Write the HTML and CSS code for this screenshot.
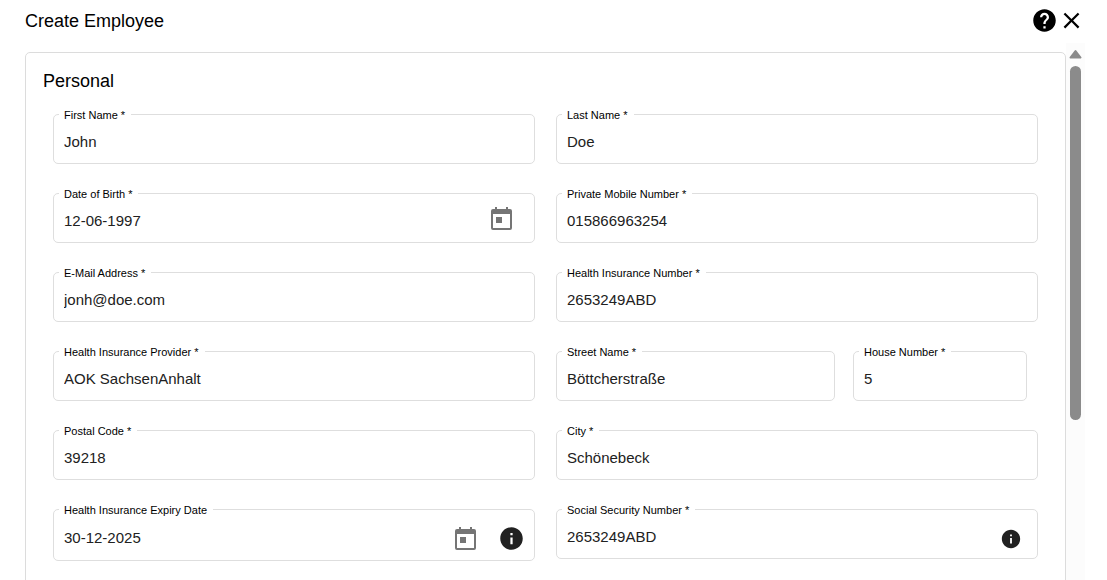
FILE: index.html
```html
<!DOCTYPE html>
<html lang="en">
	<head>
		<meta charset="utf-8" />
		<title>Create Employee</title>
		<link rel="stylesheet" href="styles.css">
	</head>
	<body>
		<!--icons used more than once-->
		<svg class="sprite">
			<symbol id="icon-today" viewBox="0 0 27 27">
				<path fill-rule="evenodd" d="M7 2h2v2h9V2h2v2h2a2 2 0 0 1 2 2v17a2 2 0 0 1-2 2H5a2 2 0 0 1-2-2V6a2 2 0 0 1 2-2h2zM5 9v14h17V9zM8 12h6v6H8z"/>
			</symbol>
			<symbol id="icon-info" viewBox="0 0 24 24">
				<path d="M12 2C6.48 2 2 6.48 2 12s4.48 10 10 10 10-4.48 10-10S17.52 2 12 2zm1 15h-2v-6h2v6zm0-8h-2V7h2v2z"/>
			</symbol>
		</svg>

		<div class="dialog">
			<header class="header">
				<h1>Create Employee</h1>
				<button type="button" class="icon-btn" aria-label="Help">
					<svg viewBox="0 0 24 24"><path d="M12 2C6.48 2 2 6.48 2 12s4.48 10 10 10 10-4.48 10-10S17.52 2 12 2zm1 17h-2v-2h2v2zm2.07-7.75l-.9.92C13.45 12.9 13 13.5 13 15h-2v-.5c0-1.1.45-2.1 1.17-2.83l1.24-1.26c.37-.36.59-.86.59-1.41 0-1.1-.9-2-2-2s-2 .9-2 2H8c0-2.21 1.79-4 4-4s4 1.79 4 4c0 .88-.36 1.68-.93 2.25z"/></svg>
				</button>
				<button type="button" class="icon-btn" aria-label="Close">
					<svg viewBox="0 0 24 24"><path d="M19 6.41L17.59 5 12 10.59 6.41 5 5 6.41 10.59 12 5 17.59 6.41 19 12 13.41 17.59 19 19 17.59 13.41 12z"/></svg>
				</button>
			</header>

			<div class="content">
				<form class="card">
					<h2>Personal</h2>
					<div class="grid">
						<div class="field">
							<label for="firstName">First Name *</label>
							<input type="text" id="firstName" value="John">
						</div>
						<div class="field">
							<label for="lastName">Last Name *</label>
							<input type="text" id="lastName" value="Doe">
						</div>

						<div class="field date">
							<label for="birth">Date of Birth *</label>
							<input type="text" id="birth" value="12-06-1997">
							<button type="button" class="icon-btn gray" aria-label="Choose date"><svg><use href="#icon-today"/></svg></button>
						</div>
						<div class="field">
							<label for="mobile">Private Mobile Number *</label>
							<input type="text" id="mobile" value="015866963254">
						</div>

						<div class="field">
							<label for="email">E-Mail Address *</label>
							<input type="text" id="email" value="jonh@doe.com">
						</div>
						<div class="field">
							<label for="insNumber">Health Insurance Number *</label>
							<input type="text" id="insNumber" value="2653249ABD">
						</div>

						<div class="field">
							<label for="provider">Health Insurance Provider *</label>
							<input type="text" id="provider" value="AOK SachsenAnhalt">
						</div>
						<div class="address">
							<div class="field">
								<label for="street">Street Name *</label>
								<input type="text" id="street" value="Böttcherstraße">
							</div>
							<div class="field">
								<label for="house">House Number *</label>
								<input type="text" id="house" value="5">
							</div>
						</div>

						<div class="field">
							<label for="postal">Postal Code *</label>
							<input type="text" id="postal" value="39218">
						</div>
						<div class="field">
							<label for="city">City *</label>
							<input type="text" id="city" value="Schönebeck">
						</div>

						<div class="field expiry">
							<label for="expiry">Health Insurance Expiry Date</label>
							<input type="text" id="expiry" value="30-12-2025">
							<button type="button" class="icon-btn gray" aria-label="Choose date"><svg><use href="#icon-today"/></svg></button>
							<button type="button" class="icon-btn dark" aria-label="Info"><svg><use href="#icon-info"/></svg></button>
						</div>
						<div class="field social">
							<label for="social">Social Security Number *</label>
							<input type="text" id="social" value="2653249ABD">
							<button type="button" class="icon-btn dark small" aria-label="Info"><svg><use href="#icon-info"/></svg></button>
						</div>
					</div>
				</form>

				<div class="scrollbar">
					<svg class="arrow" viewBox="0 0 13 10"><path d="M6.500 2L11.500 8.500H1.500z"/></svg>
					<div class="thumb"></div>
				</div>
			</div>
		</div>
	</body>
</html>
```
FILE: styles.css
```css
*{
	box-sizing: border-box;
	padding: 0;
	margin: 0;
}
body{
	background: #fff;
	color: #000;
	font-family: "Liberation Sans", Arial, sans-serif;
}
.sprite{
	display: none;
}
.dialog{
	display: flex;
	flex-direction: column;
	height: 100vh;
	overflow: hidden;
	padding: 0 22px 0 25px;
}

/* header */
.header{
	display: flex;
	align-items: center;
	height: 41px;
	margin-bottom: 2px;
}
h1, h2{
	font-size: 18px;
	line-height: 24px;
	font-weight: normal;
}
h1{
	flex: 1;
}
.icon-btn{
	flex: none;
	width: 27px;
	height: 27px;
	border: 0;
	background: none;
	fill: #000;
	cursor: pointer;
}
.icon-btn svg{
	display: block;
	width: 100%;
	height: 100%;
}
.gray{
	fill: #757575;
}
.dark{
	fill: #212121;
}
.small{
	width: 22px;
	height: 22px;
}

/* content */
.content{
	flex: 1;
	display: flex;
	min-height: 0;
}
.card{
	flex: 1;
	height: 900px;
	margin-top: 9px;
	padding: 16px 27px 0 17px;
	border: 1px solid #dcdcdc;
	border-radius: 5px;
}
.grid{
	display: grid;
	grid-template-columns: 1fr 1fr;
	gap: 29px 21px;
	align-items: start;
	margin: 21px 0 0 10px;
}
.field{
	position: relative;
	display: flex;
	align-items: center;
	min-width: 0;
	height: 50px;
	border: 1px solid #dedede;
	border-radius: 5px;
}
/* label sits on the top border */
.field label{
	position: absolute;
	top: -7px;
	left: 5px;
	padding: 0 6px 0 5px;
	background: #fff;
	font-size: 11px;
	line-height: 14px;
	white-space: nowrap;
}
.field input{
	flex: 1;
	min-width: 0;
	height: 100%;
	padding: 4px 10px 0;
	border: 0;
	outline: 0;
	background: none;
	color: #212121;
	font-family: inherit;
	font-size: 15px;
}
.address{
	display: grid;
	grid-template-columns: 279fr 174fr;
	gap: 18px;
	padding-right: 11px;
}
.date{
	padding-right: 19px;
}
.expiry{
	gap: 19px;
	height: 52px;
	padding-right: 9px;
}
.expiry .icon-btn{
	margin-top: 6px;
}
.social{
	padding-right: 15px;
}
.social .icon-btn{
	margin-top: 10px;
}

/* scrollbar */
.scrollbar{
	width: 19px;
	padding-left: 4px;
	background: #fcfcfc;
}
.arrow{
	display: block;
	width: 13px;
	height: 10px;
	margin: 6px 0 7px -1px;
	fill: #8b8b8b;
	stroke: #8b8b8b;
	stroke-width: 2;
	stroke-linejoin: round;
}
.thumb{
	width: 11px;
	height: 66%;
	border-radius: 6px;
	background: #8b8b8b;
}
```
